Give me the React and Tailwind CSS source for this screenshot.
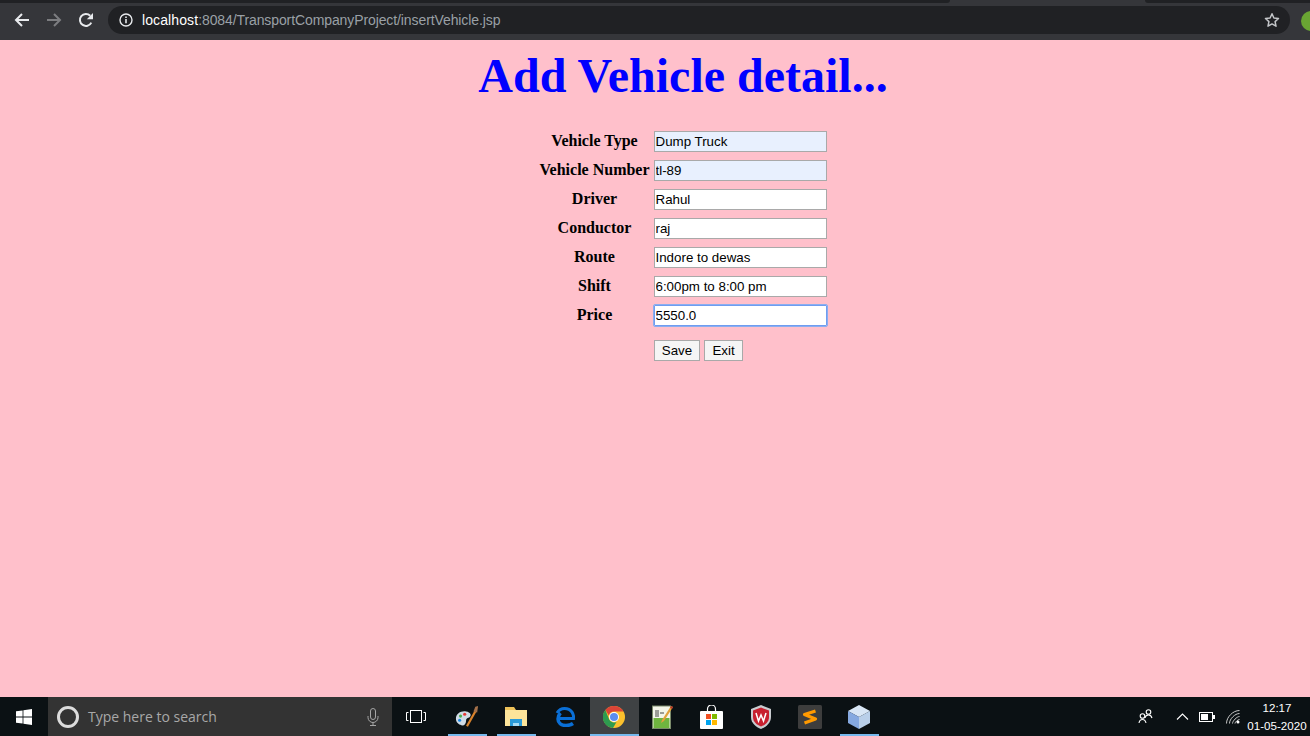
const rows = [
  ["Vehicle Type", "Dump Truck", "bg-[#e8f0fe]"],
  ["Vehicle Number", "tl-89", "bg-[#e8f0fe]"],
  ["Driver", "Rahul", "bg-white"],
  ["Conductor", "raj", "bg-white"],
  ["Route", "Indore to dewas", "bg-white"],
  ["Shift", "6:00pm to 8:00 pm", "bg-white"],
];
const sans = "font-['Liberation_Sans',Arial,sans-serif]";

function Back() {
  return <svg width="16" height="16" viewBox="0 0 16 16" fill="none" stroke="#e8eaed" strokeWidth="2"><path d="M15 8H2M8 2 2 8l6 6" /></svg>;
}
function Forward() {
  return <svg width="16" height="16" viewBox="0 0 16 16" fill="none" stroke="#7c7d80" strokeWidth="2"><path d="M1 8h13M8 2l6 6-6 6" /></svg>;
}
function Reload() {
  return (
    <svg width="16" height="16" viewBox="0 0 16 16" fill="none">
      <path d="M13.3 10.6A6 6 0 1 1 12.2 3.7" stroke="#e8eaed" strokeWidth="2" />
      <path d="M15 1v6.2H8.8z" fill="#e8eaed" />
    </svg>
  );
}
function Info() {
  return (
    <svg width="14" height="14" viewBox="0 0 14 14" fill="none">
      <circle cx="7" cy="7" r="6" stroke="#e8eaed" strokeWidth="1.4" />
      <path d="M7 6v4.2M7 3.6v1.4" stroke="#e8eaed" strokeWidth="1.6" />
    </svg>
  );
}
function Star() {
  return (
    <svg width="16" height="16" viewBox="0 0 16 16" fill="none" stroke="#c4c6c9" strokeWidth="1.5" strokeLinejoin="round">
      <path d="m8 1.8 1.9 4.2 4.6.5-3.4 3.1.9 4.6L8 11.9l-4 2.3.9-4.6L1.5 6.5l4.6-.5z" />
    </svg>
  );
}
function WinLogo() {
  return (
    <svg width="16" height="16" viewBox="0 0 16 16" fill="#fff">
      <path d="M0 2.3 6.6 1.4v6.2H0zM7.4 1.3 16 0v7.6H7.4zM0 8.4h6.6v6.2L0 13.7zM7.4 8.4H16V16l-8.6-1.3z" />
    </svg>
  );
}
function Mic() {
  return (
    <svg width="12" height="18" viewBox="0 0 12 18" fill="none" stroke="#a5a5a5" strokeWidth="1">
      <rect x="3.5" y="0.5" width="5" height="11" rx="2.5" />
      <path d="M1 8v1.5a5 5 0 0 0 10 0V8M6 14.5v2.5M3 17.5h6" />
    </svg>
  );
}
function TaskView() {
  return (
    <svg width="20" height="14" viewBox="0 0 20 14" fill="none" stroke="#fff" strokeWidth="1">
      <rect x="4.5" y="0.5" width="11" height="12" />
      <path d="M2.5 2.5H.5v8h2M17.5 2.5h2v8h-2" />
    </svg>
  );
}
function Paint() {
  return (
    <svg width="24" height="24" viewBox="0 0 26 26">
      <path d="M1 15c0-6 6-9 11-8 5 .8 6 4 4 6-2 1.500-4 1-4 4 0 3-2 6-5 5-3-.8-6-3-6-7z" fill="#cfdbe6" />
      <circle cx="6" cy="12" r="1.700" fill="#4caf50" />
      <circle cx="10.500" cy="10" r="1.700" fill="#e53935" />
      <circle cx="5" cy="16.500" r="1.700" fill="#1e88e5" />
      <path d="M13 23 22 7" stroke="#d9822b" strokeWidth="2.400" />
      <path d="m20 7 2-5 3-1-1 7z" fill="#a5714a" />
    </svg>
  );
}
function Explorer() {
  return (
    <svg width="22" height="19" viewBox="0 0 22 19">
      <path d="M0 0h9l2 3H0z" fill="#eec25a" />
      <rect y="3" width="22" height="16" fill="#fde49a" />
      <path d="M5 19v-7h12v7h-3v-3H8v3z" fill="#2a9ad8" />
      <rect x="8" y="16" width="6" height="3" fill="#a6dcf5" />
    </svg>
  );
}
function Edge() {
  return (
    <svg width="20" height="20" viewBox="0 0 20 20" fill="none">
      <path d="M4 11.500h14.500C19 8 17 1.500 9.500 1.500 6 1.500 3.500 3.500 2 6" stroke="#0a6fd6" strokeWidth="3" />
      <path d="M5.500 6C3.500 8 3 10 3 12c0 4 3 6.500 8 6.500 2.500 0 5-.6 7-2" stroke="#0a6fd6" strokeWidth="3.500" />
    </svg>
  );
}
function Chrome() {
  return (
    <svg width="22" height="22" viewBox="0 0 22 22">
      <circle cx="11" cy="11" r="11" fill="#fbc02d" />
      <path d="M11 0a11 11 0 0 1 9.500 5.500H11A5.500 5.500 0 0 0 5.800 9.400L2.400 3.900A11 11 0 0 1 11 0z" fill="#db4437" />
      <path d="M2.400 3.900 6.300 13.800A5.500 5.500 0 0 0 13.500 16L10 22A11 11 0 0 1 2.400 3.900z" fill="#2e9b4f" />
      <circle cx="11" cy="11" r="5" fill="#fff" />
      <circle cx="11" cy="11" r="4" fill="#5b8def" />
    </svg>
  );
}
function Notepad() {
  return (
    <svg width="22" height="24" viewBox="0 0 22 24">
      <rect x="0.500" y="1" width="18" height="22.500" fill="#f3f5ea" stroke="#7a8a6a" />
      <rect x="1.500" y="13" width="16" height="10" fill="#6fb43f" />
      <path d="M4 5v7M6 5v7M8 8h4" stroke="#444" strokeWidth="1" />
      <path d="m10 15 9-14 2 1-9 14-3 2z" fill="#e2a23c" />
      <path d="m19 1 2 1-1 2-2-1z" fill="#b3362b" />
    </svg>
  );
}
function Store() {
  return (
    <svg width="23" height="24" viewBox="0 0 23 24">
      <path d="M7.500 6V4a4 4 0 0 1 8 0v2" fill="none" stroke="#fff" strokeWidth="1.200" />
      <rect y="6" width="23" height="18" rx="1" fill="#fff" />
      <rect x="6" y="9" width="5" height="5" fill="#f25022" />
      <rect x="12" y="9" width="5" height="5" fill="#7fba00" />
      <rect x="6" y="15" width="5" height="5" fill="#00a4ef" />
      <rect x="12" y="15" width="5" height="5" fill="#ffb900" />
    </svg>
  );
}
function Shield() {
  return (
    <svg width="20" height="24" viewBox="0 0 20 24">
      <path d="M10 0 20 4v8c0 6-5 10-10 12C5 22 0 18 0 12V4z" fill="#c9ccd0" />
      <path d="M10 2.500 18 5.500V12c0 5-4 8-8 9.500C6 20 2 17 2 12V5.500z" fill="#c8202f" />
      <path d="m5 8 2.500 8L10 10l2.500 6L15 8" fill="none" stroke="#fff" strokeWidth="1.500" />
    </svg>
  );
}
function Sublime() {
  return (
    <svg width="24" height="24" viewBox="0 0 24 24">
      <rect width="24" height="24" rx="1.500" fill="#3d3d3d" />
      <path d="M17.500 6 6.500 9.500 17.500 14 6.500 18" fill="none" stroke="#ff9a00" strokeWidth="3.200" strokeLinejoin="round" />
    </svg>
  );
}
function Cube() {
  return (
    <svg width="22" height="24" viewBox="0 0 22 24">
      <path d="M11 0 22 6 11 12 0 6z" fill="#d8e6f5" />
      <path d="M0 6 11 12v12L0 18z" fill="#86a9e0" />
      <path d="M22 6 11 12v12l11-6z" fill="#b9cfe9" />
    </svg>
  );
}
function People() {
  return (
    <svg width="16" height="15" viewBox="0 0 16 15" fill="none" stroke="#fff" strokeWidth="1.100">
      <circle cx="10.500" cy="3" r="2.300" />
      <path d="M7 9c.4-2 2-3 3.500-3s3 1 3.500 3" />
      <circle cx="4.500" cy="7" r="2.300" />
      <path d="M1 14c.4-2.500 2-3.500 3.500-3.500s3 1 3.500 3.500" />
    </svg>
  );
}
function Battery() {
  return (
    <svg width="16" height="10" viewBox="0 0 16 10">
      <rect x="0.500" y="0.500" width="13" height="9" fill="none" stroke="#fff" />
      <rect x="2" y="2" width="7" height="6" fill="#fff" />
      <rect x="14" y="3" width="2" height="4" fill="#fff" />
    </svg>
  );
}
function Wifi() {
  return (
    <svg width="14" height="14" viewBox="0 0 14 14" fill="none" stroke="#c9c9c9" strokeWidth="1">
      <path d="M.5 13.500C.5 7 7 .5 13.500.5M3.500 13.500C3.500 9 9 3.500 13.500 3.500M6.500 13.500C6.500 11 11 6.500 13.500 6.500M9 13.500C9 12 12 9.500 13.500 9.500" />
      <circle cx="12" cy="12" r="1.500" fill="#fff" stroke="none" />
    </svg>
  );
}

function TaskIcon({ children, underline, active }) {
  return (
    <div className={`relative flex h-full w-[49px] shrink-0 items-center justify-center pr-[2px] ${active ? "bg-[#3f4244]" : ""}`}>
      {children}
      {underline ? <div className={`absolute bottom-0 h-[2px] bg-[#76b9ed] ${active ? "inset-x-0" : "inset-x-[5px]"}`} /> : null}
    </div>
  );
}

export default function App() {
  return (
    <div className="flex h-[736px] w-[1310px] flex-col overflow-hidden bg-[#ffc0cb]">
      <header className="flex h-[40px] shrink-0 flex-col bg-[#35363a]">
        <div className="flex h-[3px] shrink-0">
          <div className="w-[950px] rounded-br-md bg-[#202124]" />
          <div className="flex-1 bg-[#35363a]" />
          <div className="w-[165px] rounded-bl-md bg-[#202124]" />
        </div>
        <div className="relative flex flex-1 items-center">
          <div className="flex w-[108px] shrink-0 items-center pb-[3px]">
            <div className="ml-[14px]"><Back /></div>
            <div className="ml-[16px]"><Forward /></div>
            <div className="ml-[16px]"><Reload /></div>
          </div>
          <div className={`mb-[3px] flex h-[28px] w-[1182px] items-center rounded-full bg-[#202124] pl-[11px] pr-[10px] text-[14px] ${sans}`}>
            <Info />
            <span className="ml-[9px] pt-[1px] tracking-[0.1px] text-white">localhost</span>
            <span className="pt-[1px] tracking-[-0.1px] text-[#9aa0a6]">:8084/TransportCompanyProject/insertVehicle.jsp</span>
            <span className="ml-auto"><Star /></span>
          </div>
          <div className="absolute left-[1301px] top-[8px] h-[20px] w-[20px] rounded-full bg-[#6aa533]" />
        </div>
      </header>

      <main className="flex flex-1 flex-col items-center pl-[56px] font-['Liberation_Serif','Times_New_Roman',serif] text-black">
        <h1 className="mt-[8px] text-[48px] leading-[55px] font-bold text-[#0000ff]">Add Vehicle detail...</h1>
        <div className="mt-[28px] flex flex-col gap-[8px]">
          {rows.map(([label, value, bg]) => (
            <div key={label} className="flex h-[21px] items-center">
              <div className="w-[110px] pb-[2px] text-center text-[16px] font-bold whitespace-nowrap">{label}</div>
              <input
                readOnly
                value={value}
                className={`ml-[4px] h-[21px] w-[173px] border border-[#a9a9a9] px-[1px] text-[13.33px] text-black outline-none ${bg} ${sans}`}
              />
            </div>
          ))}
          <div className="flex h-[21px] items-center">
            <div className="w-[110px] pb-[2px] text-center text-[16px] font-bold">Price</div>
            <input
              readOnly
              value="5550.0"
              className={`ml-[4px] h-[21px] w-[173px] rounded-[1px] border border-[#6f9cf0] bg-white px-[1px] text-[13.33px] text-black outline outline-1 outline-[#8aaef0] ${sans}`}
            />
          </div>
          <div className={`mt-[6px] ml-[114px] flex h-[21px] gap-[4px] text-[13.33px] text-black ${sans}`}>
            <button className="h-[21px] w-[46px] border border-[#a9a9a9] bg-[#f5f5f5] pl-[1px]">Save</button>
            <button className="h-[21px] w-[39px] border border-[#a9a9a9] bg-[#f5f5f5] pl-[1px]">Exit</button>
          </div>
        </div>
      </main>

      <footer className="flex h-[39px] shrink-0 items-stretch bg-[#0b1114]">
        <div className="flex w-[48px] shrink-0 items-center justify-center"><WinLogo /></div>
        <div className={`flex w-[344px] shrink-0 items-center bg-[#333333] pl-[9px] pr-[13px] font-['Open_Sans','Liberation_Sans',sans-serif] text-[14px] text-[#a8a8a8]`}>
          <div className="h-[22px] w-[22px] rounded-full border-[3px] border-[#dcdcdc]" />
          <span className="ml-[9px]">Type here to search</span>
          <span className="ml-auto flex"><Mic /></span>
        </div>
        <div className="flex w-[51px] shrink-0 items-center justify-start pl-[14px]"><TaskView /></div>
        <TaskIcon underline><Paint /></TaskIcon>
        <TaskIcon underline><Explorer /></TaskIcon>
        <TaskIcon><Edge /></TaskIcon>
        <TaskIcon underline active><Chrome /></TaskIcon>
        <TaskIcon><Notepad /></TaskIcon>
        <TaskIcon><Store /></TaskIcon>
        <TaskIcon><Shield /></TaskIcon>
        <TaskIcon><Sublime /></TaskIcon>
        <TaskIcon underline><Cube /></TaskIcon>
        <div className="flex flex-1 items-center justify-end pr-[2px]">
          <People />
          <svg className="ml-[22px]" width="13" height="7" viewBox="0 0 12 7" fill="none" stroke="#fff" strokeWidth="1.100"><path d="m.5 6.500 5.500-5.500 5.500 5.500" /></svg>
          <span className="ml-[10px] flex"><Battery /></span>
          <span className="ml-[11px] flex"><Wifi /></span>
          <div className={`ml-[6px] flex w-[62px] flex-col items-center text-[11.6px] leading-[18px] text-white ${sans}`}>
            <span>12:17</span>
            <span>01-05-2020</span>
          </div>
        </div>
      </footer>
    </div>
  );
}
